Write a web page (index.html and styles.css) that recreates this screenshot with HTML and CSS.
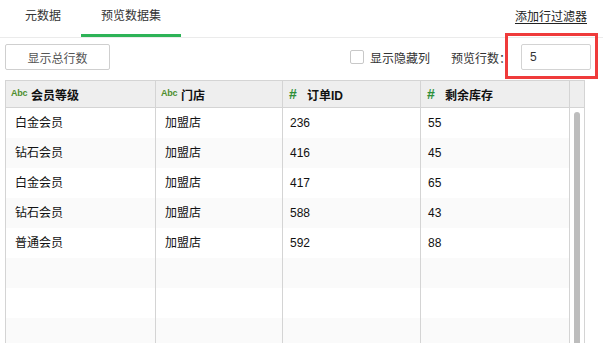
FILE: index.html
```html
<!DOCTYPE html>
<html lang="zh">
<head>
<meta charset="utf-8">
<link rel="stylesheet" href="styles.css">
</head>
<body>
<div class="page">
  <div class="tabs">
    <div class="tab">元数据</div>
    <div class="tab active">预览数据集</div>
    <div class="tabs-fill"></div>
    <a class="filter-link">添加行过滤器</a>
  </div>
  <div class="toolbar">
    <button class="btn">显示总行数</button>
    <div class="spacer"></div>
    <label class="check"><span class="box"></span><span>显示隐藏列</span></label>
    <span class="rows-label">预览行数：</span>
    <div class="input">5</div>
    <div class="highlight"></div>
  </div>
  <div class="table">
    <div class="head">
      <div class="th"><span class="abc">Abc</span><span class="tt">会员等级</span></div>
      <div class="th"><span class="abc">Abc</span><span class="tt">门店</span></div>
      <div class="th"><span class="num">#</span><span class="tt">订单ID</span></div>
      <div class="th"><span class="num">#</span><span class="tt">剩余库存</span></div>
      <div class="th th-scroll"></div>
    </div>
    <div class="body">
      <div class="rows">
        <div class="row"><div class="td">白金会员</div><div class="td">加盟店</div><div class="td n">236</div><div class="td n">55</div></div>
        <div class="row alt"><div class="td">钻石会员</div><div class="td">加盟店</div><div class="td n">416</div><div class="td n">45</div></div>
        <div class="row"><div class="td">白金会员</div><div class="td">加盟店</div><div class="td n">417</div><div class="td n">65</div></div>
        <div class="row alt"><div class="td">钻石会员</div><div class="td">加盟店</div><div class="td n">588</div><div class="td n">43</div></div>
        <div class="row"><div class="td">普通会员</div><div class="td">加盟店</div><div class="td n">592</div><div class="td n">88</div></div>
        <div class="row alt"><div class="td"></div><div class="td"></div><div class="td"></div><div class="td"></div></div>
        <div class="row"><div class="td"></div><div class="td"></div><div class="td"></div><div class="td"></div></div>
        <div class="row alt"><div class="td"></div><div class="td"></div><div class="td"></div><div class="td"></div></div>
      </div>
      <div class="scroll"><div class="thumb"></div></div>
    </div>
  </div>
</div>
</body>
</html>
```
FILE: styles.css
```css
html, body {
  margin: 0;
  padding: 0;
  background: #fff;
  overflow: hidden;
}
body {
  font-family: "Liberation Sans", "Noto Sans CJK SC", sans-serif;
  font-size: 12px;
  color: #222;
}
.page {
  width: 603px;
  height: 343px;
  overflow: hidden;
}
.tabs {
  display: flex;
  height: 37px;
  border-bottom: 1px solid #ebebeb;
  padding-left: 5px;
  padding-right: 16px;
}
.tab {
  box-sizing: border-box;
  height: 37px;
  padding: 0 20px;
  line-height: 33px;
  border-bottom: 3px solid transparent;
  color: #333;
}
.tab.active {
  border-bottom-color: #2db357;
}
.tabs-fill {
  flex: 1;
}
.filter-link {
  line-height: 35px;
  color: #222;
  text-decoration: underline;
  text-underline-offset: 2px;
}
.toolbar {
  position: relative;
  display: flex;
  align-items: center;
  height: 26px;
  padding: 6px 12px 10px 5px;
}
.btn {
  box-sizing: border-box;
  width: 105px;
  height: 26px;
  border: 1px solid #cfcfcf;
  border-radius: 2px;
  background: #fff;
  color: #555;
  font-family: inherit;
  font-size: 12px;
  padding: 0;
}
.spacer {
  flex: 1;
}
.check {
  display: flex;
  align-items: center;
  gap: 6px;
  color: #333;
}
.box {
  box-sizing: border-box;
  width: 14px;
  height: 14px;
  border: 1px solid #c8c8c8;
  border-radius: 2px;
  background: #fff;
}
.rows-label {
  margin-left: 21px;
  width: 70px;
  color: #333;
}
.input {
  box-sizing: border-box;
  width: 70px;
  height: 26px;
  border: 1px solid #d3d3d3;
  border-radius: 2px;
  padding-left: 8px;
  line-height: 24px;
  color: #333;
}
.highlight {
  position: absolute;
  left: 505px;
  top: -5px;
  width: 87px;
  height: 40px;
  border: 3px solid #ef3b3b;
}
.table {
  margin-left: 5px;
  width: 579px;
  border-left: 1px solid #d4d4d4;
  border-top: 1px solid #d4d4d4;
}
.head {
  display: grid;
  grid-template-columns: 150px 127px 138px 149px 15px;
  background: #eeeeee;
}
.th {
  box-sizing: border-box;
  height: 27px;
  border-right: 1px solid #d4d4d4;
  border-bottom: 1px solid #d4d4d4;
  display: flex;
  align-items: center;
  padding-left: 5px;
}
.th-scroll {
  padding: 0;
}
.abc {
  font-family: "Liberation Sans", sans-serif;
  font-size: 9px;
  font-weight: bold;
  letter-spacing: -0.3px;
  color: #4f8f2f;
  width: 20px;
  margin-top: -3px;
}
.num {
  font-family: "Liberation Sans", sans-serif;
  font-size: 14px;
  font-weight: bold;
  color: #2f8f3a;
  width: 19px;
  padding-left: 1px;
  box-sizing: border-box;
}
.tt {
  font-weight: bold;
  font-size: 12px;
  color: #111;
}
.body {
  display: flex;
}
.rows {
  width: 564px;
}
.row {
  display: grid;
  grid-template-columns: 150px 127px 138px 149px;
  height: 30px;
  background: #fff;
}
.row.alt {
  background: #fafafa;
}
.td {
  box-sizing: border-box;
  border-right: 1px solid #d4d4d4;
  padding-left: 9px;
  line-height: 30px;
  color: #111;
}
.td.n {
  padding-left: 7px;
}
.scroll {
  box-sizing: border-box;
  width: 15px;
  border-right: 1px solid #d4d4d4;
  background: #fff;
  padding-top: 4px;
  padding-left: 4px;
}
.thumb {
  width: 6px;
  height: 300px;
  background: #bdbdbd;
  border-radius: 3px 3px 0 0;
}
```
